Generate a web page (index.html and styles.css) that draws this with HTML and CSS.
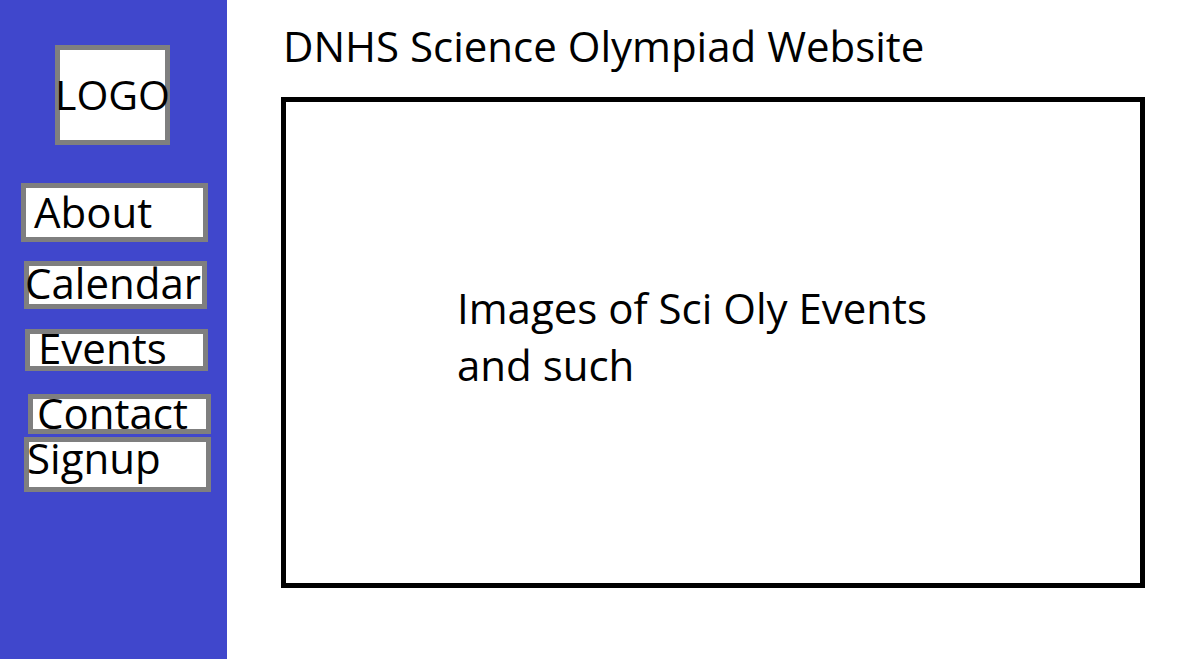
FILE: index.html
```html
<!DOCTYPE html>
<html lang="en">
<head>
    <meta charset="UTF-8">
    <meta name="viewport" content="width=device-width, initial-scale=1.0">
    <title>DNHS Science Olympiad</title>
    <link rel="stylesheet" href="styles.css">
</head>
<body>

    <div class="page">
        <nav class="sidebar">
            <div class="logo"><span>LOGO</span></div>
            <a class="nav-item about" href="#"><span>About</span></a>
            <a class="nav-item calendar" href="#"><span>Calendar</span></a>
            <a class="nav-item events" href="#"><span>Events</span></a>
            <a class="nav-item contact" href="#"><span>Contact</span></a>
            <a class="nav-item signup" href="#"><span>Signup</span></a>
        </nav>

        <main class="main">
            <h1 class="title">DNHS Science Olympiad Website</h1>
            <div class="gallery">
                <p>Images of Sci Oly Events and such</p>
            </div>
        </main>
    </div>

</body>
</html>
```

FILE: styles.css
```css
body {
    margin: 0;
    background-color: #fff;
    color: #000;
    font-family: "Open Sans", "Noto Sans", sans-serif;
}
.page {
    display: flex;
    min-height: 100vh;
}

/* sidebar */
.sidebar {
    width: 227px;
    flex-shrink: 0;
    background-color: #4047cc;
    display: flex;
    flex-direction: column;
    align-items: flex-start;
    padding-top: 45px;
    box-sizing: border-box;
}
.logo {
    width: 115px;
    height: 100px;
    margin-left: 55px;
    box-sizing: border-box;
    border: 5px solid #7f7f7f;
    background-color: #fff;
    display: flex;
    justify-content: center;
    font-size: 41px;
    line-height: 40px;
    white-space: nowrap;
}
.logo span {
    margin-top: 24px;
}
.nav-item {
    display: block;
    box-sizing: border-box;
    border: 5px solid #7f7f7f;
    background-color: #fff;
    color: #000;
    text-decoration: none;
    font-size: 42px;
    line-height: 41px;
    white-space: nowrap;
}
.nav-item span {
    display: block;
}
.about {
    margin: 38px 0 0 21px;
    width: 187px;
    height: 59px;
}
.about span { margin: 3px 0 0 8px; }
.calendar {
    margin: 19px 0 0 24px;
    width: 183px;
    height: 48px;
}
.calendar span { margin: -4px 0 0 -4px; }
.events {
    margin: 20px 0 0 25px;
    width: 183px;
    height: 42px;
}
.events span { margin: -7px 0 0 8px; }
.contact {
    margin: 23px 0 0 28px;
    width: 183px;
    height: 40px;
}
.contact span { margin: -7px 0 0 4px; }
.signup {
    margin: 3px 0 0 24px;
    width: 187px;
    height: 55px;
}
.signup span { margin: -5px 0 0 -2px; }

/* main area */
.main {
    flex: 1;
    padding: 25px 0 0 54px;
}
.title {
    margin: 0 0 31px 2px;
    font-size: 42px;
    font-weight: normal;
    line-height: 41px;
}
.gallery {
    width: 864px;
    height: 491px;
    box-sizing: border-box;
    border: 5px solid #000;
    padding: 177px 0 0 171px;
}
.gallery p {
    margin: 0;
    width: 490px;
    font-size: 42px;
    line-height: 57px;
}
```
